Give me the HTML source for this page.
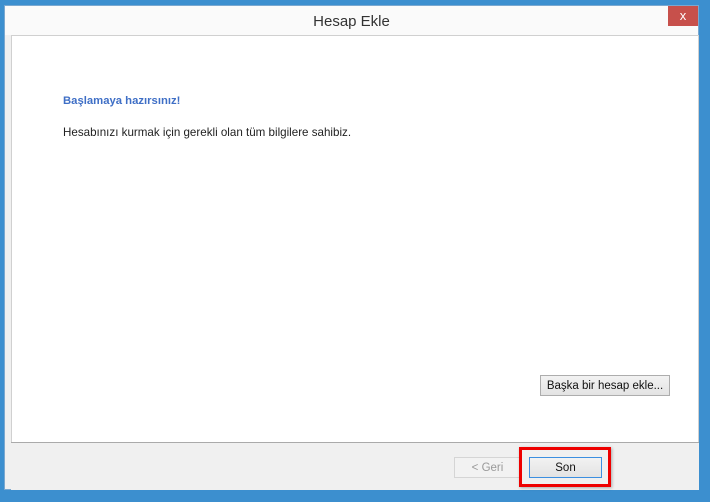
<!DOCTYPE html>
<html><head><meta charset="utf-8"><style>
*{margin:0;padding:0;box-sizing:border-box}
body{width:710px;height:502px;background:#3c8fcf;position:relative;overflow:hidden;font-family:"Liberation Sans",sans-serif}
.win{position:absolute;left:4px;top:5px;width:695px;height:485px;background:#f0f0f0;border:1px solid #7aa8d0}
.title{text-align:center;font-size:15px;line-height:31px;color:#333;background:#fafafa}
.close{position:absolute;width:30px;height:20px;background:#c7504b;color:#fff;font-size:13px;text-align:center;line-height:19px}
.panel{position:absolute;left:11px;top:35px;width:688px;height:408px;background:#fff;border:1px solid #d0d0d0}
.foot{position:absolute;left:11px;top:442px;width:688px;height:48px;background:#f0f0f0;border-top:1px solid #aaa}
.h{position:absolute;left:63px;top:95px;font-size:11.3px;font-weight:bold;color:#3f6fc6}
.p{position:absolute;left:63px;top:126px;font-size:11.6px;color:#222}
.btn{position:absolute;font-size:11.5px;text-align:center;border:1px solid #adadad;background:linear-gradient(#f2f2f2,#e3e3e3);color:#111}
</style></head><body>
<div class="win"></div>
<div class="title" style="position:absolute;left:5px;top:6px;width:693px;height:29px">Hesap Ekle</div>
<div class="close" style="left:668px;top:6px">x</div>
<div class="panel"></div>
<div class="foot"></div>
<div class="h">Başlamaya hazırsınız!</div>
<div class="p">Hesabınızı kurmak için gerekli olan tüm bilgilere sahibiz.</div>
<div class="btn" style="left:540px;top:375px;width:130px;height:21px;line-height:20px">Başka bir hesap ekle...</div>
<div class="btn" style="left:454px;top:457px;width:67px;height:21px;line-height:20px;color:#999;border-color:#d5d5d5;background:#f2f2f2">&lt; Geri</div>
<div class="btn" style="left:529px;top:457px;width:73px;height:21px;line-height:20px;border-color:#3c8fe0">Son</div>
<div style="position:absolute;left:519px;top:447px;width:92px;height:40px;border:3px solid #e00;box-shadow:1px 1px 3px rgba(0,0,0,.3)"></div>
</body></html>
